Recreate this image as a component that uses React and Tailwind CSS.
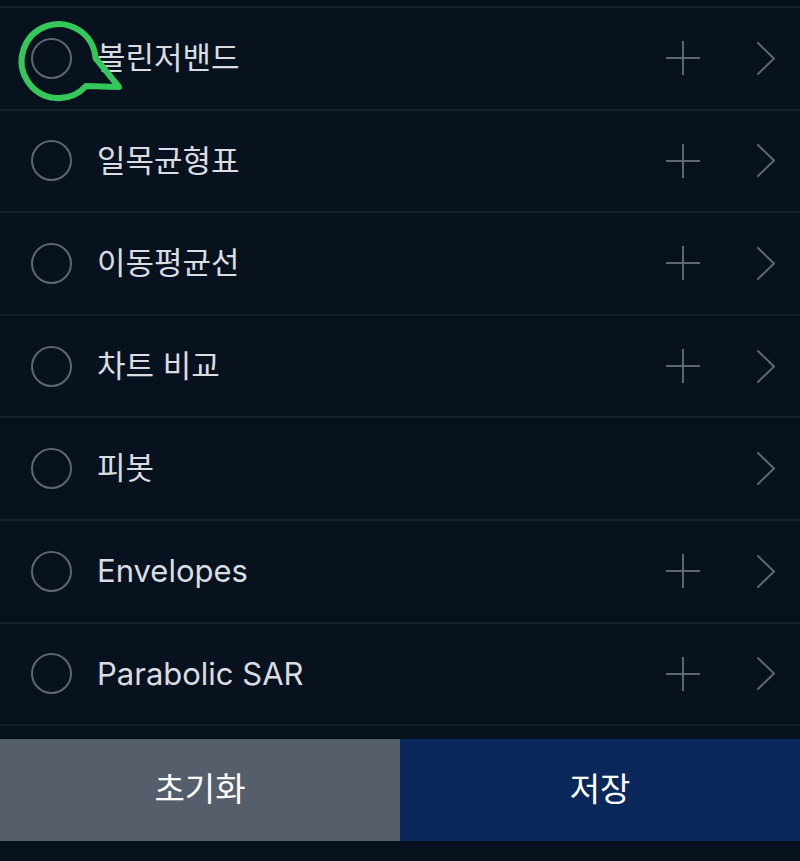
import React from 'react';

const items = [
  { name: '볼린저밴드', plus: true },
  { name: '일목균형표', plus: true },
  { name: '이동평균선', plus: true },
  { name: '차트 비교', plus: true },
  { name: '피봇', plus: false },
  { name: 'Envelopes', plus: true },
  { name: 'Parabolic SAR', plus: true },
];

const font = { fontFamily: 'Inter, "Noto Sans CJK KR", sans-serif' };

const PlusIcon = () => (
  <svg width="34" height="34" viewBox="0 0 34 34" className="text-[#5f6672]">
    <path d="M17 0 V34 M0 17 H34" stroke="currentColor" strokeWidth="2" fill="none" />
  </svg>
);

const ChevronIcon = () => (
  <svg width="20" height="33" viewBox="0 0 20 33" className="text-[#5f6672]">
    <path d="M2 1 L18 16.5 L2 32" stroke="currentColor" strokeWidth="2" fill="none" strokeLinecap="round" strokeLinejoin="round" />
  </svg>
);

const Row = ({ name, plus }) => (
  <div className="flex h-[102.6px] items-center border-t-2 border-[#151f2c] pl-[31px] pr-[24px]">
    <div className="h-[41px] w-[41px] shrink-0 rounded-full border-2 border-[#5f6672]" />
    <span className="ml-[25px] flex-1 text-[31px] text-[#d9dce1]">{name}</span>
    <div className="flex w-[34px] justify-center">{plus && <PlusIcon />}</div>
    <div className="ml-[56px] flex w-[20px] justify-center">
      <ChevronIcon />
    </div>
  </div>
);

const App = () => {
  return (
    <div className="relative h-[861px] w-[800px] overflow-hidden bg-[#08121f]" style={font}>
      <div className="pt-[6px]">
        {items.map((item) => (
          <Row key={item.name} {...item} />
        ))}
        <div className="border-t-2 border-[#151f2c]" />
      </div>

      <div className="mt-[13px] grid h-[102px] grid-cols-2 text-[33px] text-white">
        <button className="flex items-center justify-center bg-[#565e6b]">초기화</button>
        <button className="flex items-center justify-center bg-[#0a2859]">저장</button>
      </div>

      {/* annotation bubble */}
      <svg className="absolute left-0 top-0" width="130" height="110" viewBox="0 0 130 110">
        <path
          d="M95.5 58 A37 37 0 1 0 86 86 L119 87 Z"
          stroke="#34c759"
          strokeWidth="6"
          fill="none"
          strokeLinejoin="round"
        />
      </svg>
    </div>
  );
};

export default App;
